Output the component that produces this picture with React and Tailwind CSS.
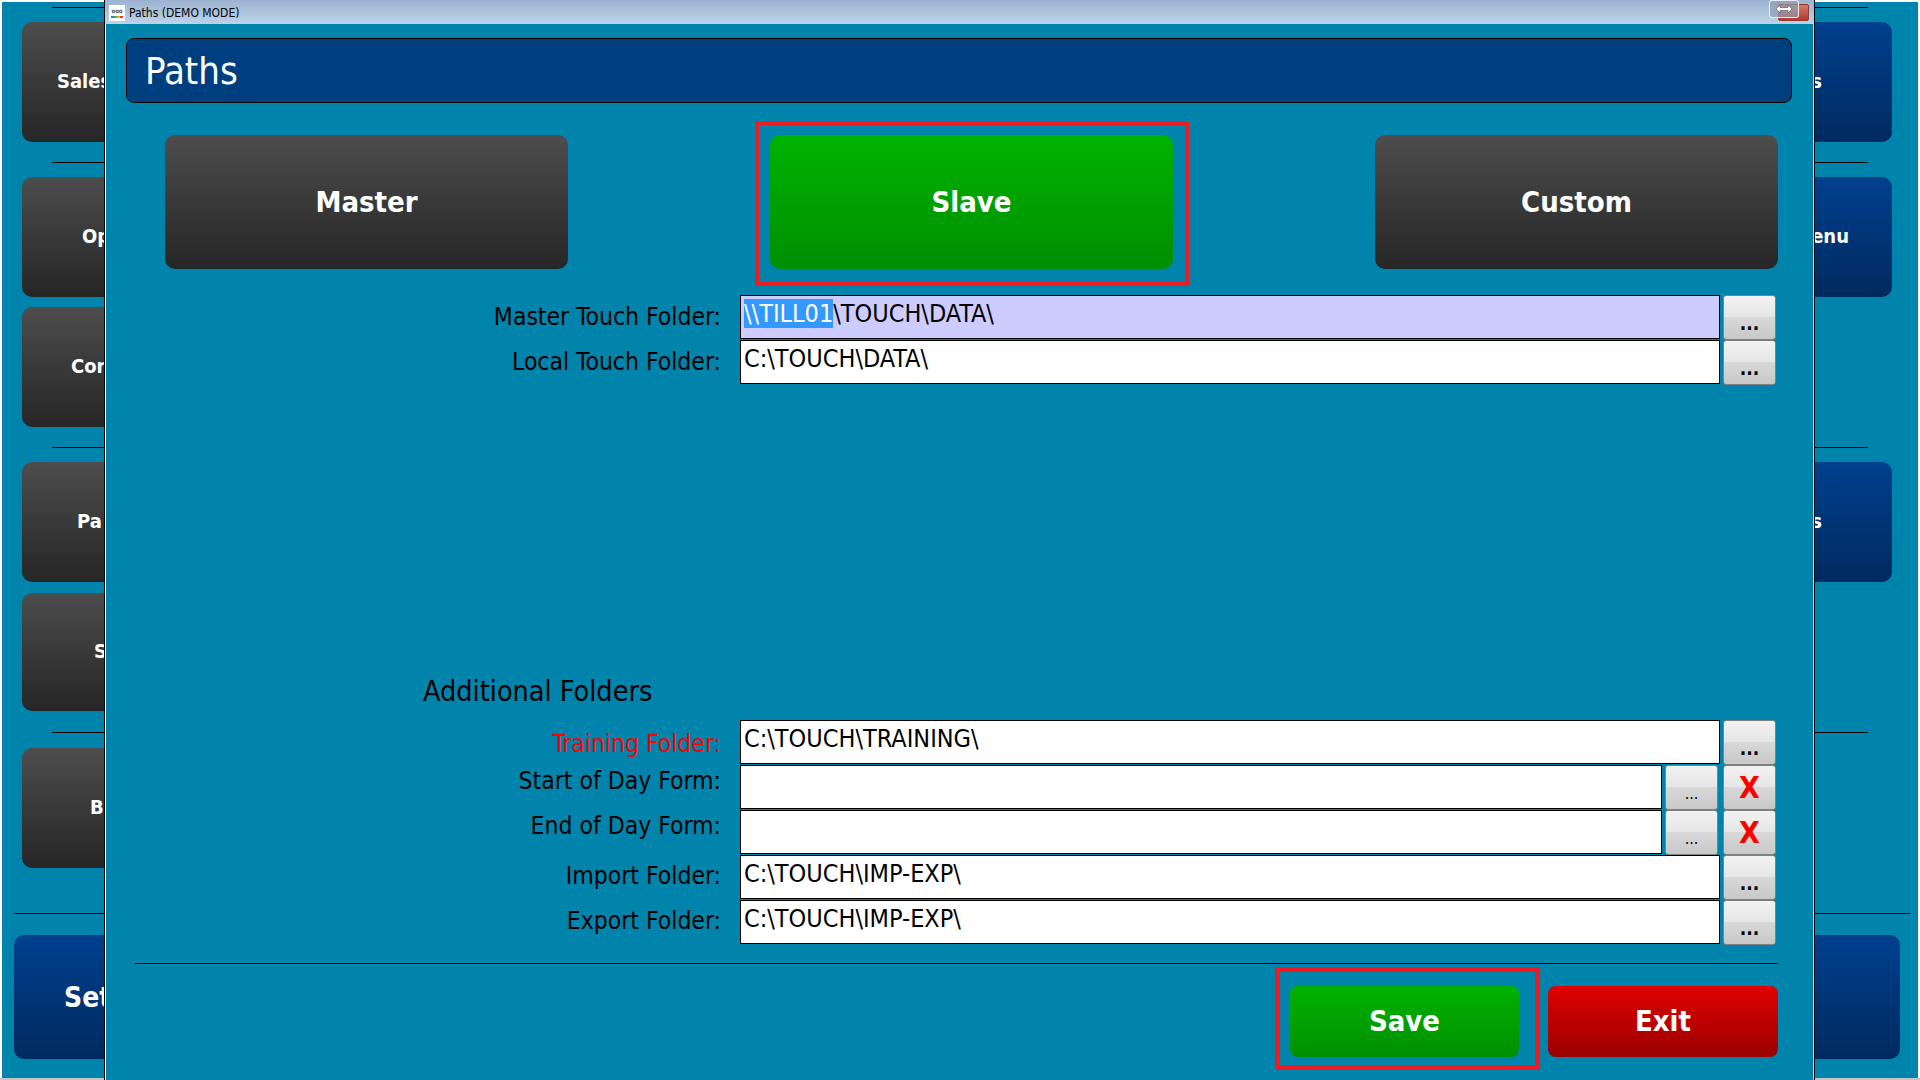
import React from 'react';

const FONT = "font-['DejaVu_Sans_Condensed','DejaVu_Sans',sans-serif]";

const navSpacing = ['mt-[5px]', 'mt-[14px]', 'mt-[20px]', 'mt-[14px]', 'mt-[10px]', 'mt-[20px]', 'mt-[14px]', 'mt-[11px]', 'mt-[21px]', 'mt-[15px]', 'mt-[45px]', 'mt-[21px]'];

const leftNav = [
  { line: true },
  { label: 'Sales', pad: 'pl-[35px]', dark: true },
  { line: true },
  { label: 'Op', pad: 'pl-[60px]', dark: true },
  { label: 'Cor', pad: 'pl-[49px]', dark: true },
  { line: true },
  { label: 'Pa', pad: 'pl-[55px]', dark: true },
  { label: 'S', pad: 'pl-[72px]', dark: true, short: true },
  { line: true },
  { label: 'B', pad: 'pl-[68px]', dark: true },
  { line: true, wide: true },
  { label: 'Set', pad: 'pl-[50px]', wide: true },
];

const rightNav = [
  { line: true },
  { label: 's', pad: 'pr-[70px]' },
  { line: true },
  { label: 'Menu', pad: 'pr-[43px]' },
  { blank: true },
  { line: true },
  { label: 's', pad: 'pr-[70px]' },
  { blank: true, short: true },
  { line: true },
  { blank: true },
  { line: true, wide: true },
  { label: '', wide: true },
];

function NavColumn({ items, side }) {
  const isLeft = side === 'left';
  return (
    <div className={`flex flex-col w-[260px] ${isLeft ? 'pl-[12px]' : 'pr-[8px]'}`}>
      {items.map((item, i) => {
        if (item.line) {
          const inset = item.wide ? '' : isLeft ? 'ml-[38px]' : 'mr-[42px]';
          return <div key={i} className={`h-[1px] bg-black shrink-0 ${navSpacing[i]} ${inset}`} />;
        }
        const height = item.wide ? 'h-[124px] text-[28px] pt-[2px]' : item.short ? 'h-[118px] text-[20px] pb-[2px]' : 'h-[120px] text-[20px] pb-[2px]';
        // the right column leaves gaps where the left one has buttons
        if (item.blank) return <div key={i} className={`shrink-0 ${navSpacing[i]} ${height}`} />;
        const inset = isLeft ? (item.wide ? '' : 'ml-[8px]') : item.wide ? 'mr-[10px]' : 'mr-[18px]';
        const fill = item.dark
          ? 'bg-gradient-to-b from-[#4d4d4d] to-[#262626]'
          : 'bg-gradient-to-b from-[#00408f] to-[#002a60]';
        return (
          <div
            key={i}
            className={`flex items-center shrink-0 rounded-[10px] font-bold text-white ${navSpacing[i]} ${inset} ${height} ${fill} ${item.pad || ''} ${isLeft ? 'justify-start' : 'justify-end'}`}
          >
            {item.label}
          </div>
        );
      })}
    </div>
  );
}

function ModeButton({ label, fill }) {
  return (
    <div className={`w-[403px] h-[134px] rounded-[10px] flex items-center justify-center text-white font-bold text-[29px] pt-[1px] ${fill}`}>
      {label}
    </div>
  );
}

function BrowseButton({ children = '...', small, red }) {
  return (
    <div
      className={`relative h-[45px] w-[53px] shrink-0 rounded-[3px] border border-[#808080] flex items-center justify-center font-bold bg-[linear-gradient(#f2f2f2_0%,#e6e6e6_48%,#d9d9d9_48%,#c8c8c8_100%)] ${red ? 'text-[#ff0000] text-[30px]' : small ? 'text-black text-[16px] font-normal pt-[12px]' : 'text-black text-[19px] pt-[12px]'}`}
    >
      {children}
    </div>
  );
}

function FolderRow({ label, value, labelTone = 'text-black', labelPad = 'pt-0', tint, selected, withClear }) {
  return (
    <div className="flex h-[45px]">
      <div className={`w-[616px] shrink-0 text-right text-[24.5px] leading-[44px] ${labelTone} ${labelPad}`}>{label}</div>
      <div className="w-[19px] shrink-0" />
      <div className={`flex-1 h-[44px] border-[1.5px] border-black pl-[3px] text-[25px] leading-[36px] text-black whitespace-nowrap ${tint ? 'bg-[#ccccff]' : 'bg-white'}`}>
        {selected && <span className="bg-[#3399ff] text-white">{selected}</span>}
        {value}
      </div>
      {withClear ? (
        <div className="flex ml-[3px] gap-[5px]">
          <BrowseButton small />
          <BrowseButton red>X</BrowseButton>
        </div>
      ) : (
        <div className="ml-[3px]">
          <BrowseButton />
        </div>
      )}
    </div>
  );
}

function TitleIcon() {
  return (
    <svg width="16" height="16" viewBox="0 0 16 16" className="shrink-0">
      <rect width="16" height="16" fill="#fff" />
      <text x="8" y="8" textAnchor="middle" fontSize="6" fontWeight="700" fill="#555">ooo</text>
      <rect x="2" y="11" width="3" height="2" fill="#3a7fd5" />
      <rect x="5" y="11" width="3" height="2" fill="#4caf50" />
      <rect x="8" y="11" width="3" height="2" fill="#f5a623" />
      <rect x="11" y="11" width="3" height="2" fill="#e53935" />
    </svg>
  );
}

export default function App() {
  return (
    <div className={`relative w-[1920px] h-[1080px] overflow-hidden bg-white p-[2px] ${FONT}`}>
      <div className="flex justify-between h-full bg-[#0084ab]">
        <NavColumn items={leftNav} side="left" />
        <NavColumn items={rightNav} side="right" />
      </div>
      <div className="absolute left-0 right-0 bottom-0 h-[2px] bg-[#c4c4c4]" />

      {/* the Paths window floats over the main menu */}
      <div className="absolute left-[104px] top-0 w-[1711px] h-[1080px] flex flex-col bg-[#0084ab] border-x border-black shadow-[inset_1px_0_0_#ffffff,inset_-1px_0_0_#b8cfe6]">
        <div className="relative h-[24px] shrink-0 flex items-center gap-[4px] pl-[4px] pt-[1px] text-[12px] text-black bg-gradient-to-b from-[#9bb3d1] to-[#bdd3ea]">
          <TitleIcon />
          <span>Paths (DEMO MODE)</span>
          <div className="absolute right-[5px] top-[4px] w-[31px] h-[17px] rounded-[2px] bg-gradient-to-b from-[#d47a68] to-[#b3392a] border border-[#8f3a32]" />
          <div className="absolute right-[15px] top-0 w-[30px] h-[18px] rounded-[3px] border border-white/80 bg-[#8e9db0]/70 flex items-center justify-center">
            <svg width="18" height="10" viewBox="0 0 18 10">
              <path d="M1 5l4-4v2.5h8V1l4 4-4 4V6.5H5V9z" fill="#fff" stroke="#555" strokeWidth="0.6" />
            </svg>
          </div>
        </div>

        <div className="mt-[14px] ml-[21px] mr-[22px] h-[65px] shrink-0 rounded-[8px] border border-black bg-[#003f7f] pl-[18px] text-white text-[38px] leading-[64px] font-extralight">
          Paths
        </div>

        <div className="mt-[32px] ml-[60px] mr-[36px] flex justify-between shrink-0">
          <ModeButton label="Master" fill="bg-gradient-to-b from-[#4d4d4d] to-[#262626]" />
          <div className="relative">
            <ModeButton label="Slave" fill="bg-gradient-to-b from-[#00b300] to-[#008f00]" />
            <div className="absolute -left-[15px] -right-[16px] -top-[14px] -bottom-[17px] border-[4px] border-[#ed1c24]" />
          </div>
          <ModeButton label="Custom" fill="bg-gradient-to-b from-[#4d4d4d] to-[#262626]" />
        </div>

        <div className="mt-[26px] mr-[38px] flex flex-col shrink-0">
          <FolderRow label="Master Touch Folder:" selected="\\TILL01" value="\TOUCH\DATA\" tint />
          <FolderRow label="Local Touch Folder:" value="C:\TOUCH\DATA\" />
        </div>

        <div className="mt-[292px] ml-[318px] h-[30px] shrink-0 text-[28.5px] leading-[30px] text-black">Additional Folders</div>

        <div className="mt-[13px] mr-[38px] flex flex-col shrink-0">
          <FolderRow label="Training Folder:" value="C:\TOUCH\TRAINING\" labelTone="text-[#ff0000]" labelPad="pt-[2px]" />
          <FolderRow label="Start of Day Form:" value="" labelPad="-mt-[6px]" withClear />
          <FolderRow label="End of Day Form:" value="" labelPad="-mt-[6px]" withClear />
          <FolderRow label="Import Folder:" value="C:\TOUCH\IMP-EXP\" labelPad="-mt-[1px]" />
          <FolderRow label="Export Folder:" value="C:\TOUCH\IMP-EXP\" labelPad="-mt-[1px]" />
        </div>

        <div className="mt-[18px] ml-[30px] mr-[36px] h-[1px] bg-black shrink-0" />

        <div className="mt-[22px] mr-[36px] flex justify-end gap-[29px] shrink-0">
          <div className="relative">
            <div className="w-[229px] h-[71px] rounded-[8px] flex items-center justify-center text-white font-bold text-[29px] bg-gradient-to-b from-[#00b300] to-[#008f00]">Save</div>
            <div className="absolute -left-[15px] -right-[21px] -top-[19px] -bottom-[13px] border-[5px] border-[#ed1c24]" />
          </div>
          <div className="w-[230px] h-[71px] rounded-[8px] flex items-center justify-center text-white font-bold text-[29px] bg-gradient-to-b from-[#e00000] to-[#9b0000]">Exit</div>
        </div>
      </div>
    </div>
  );
}
